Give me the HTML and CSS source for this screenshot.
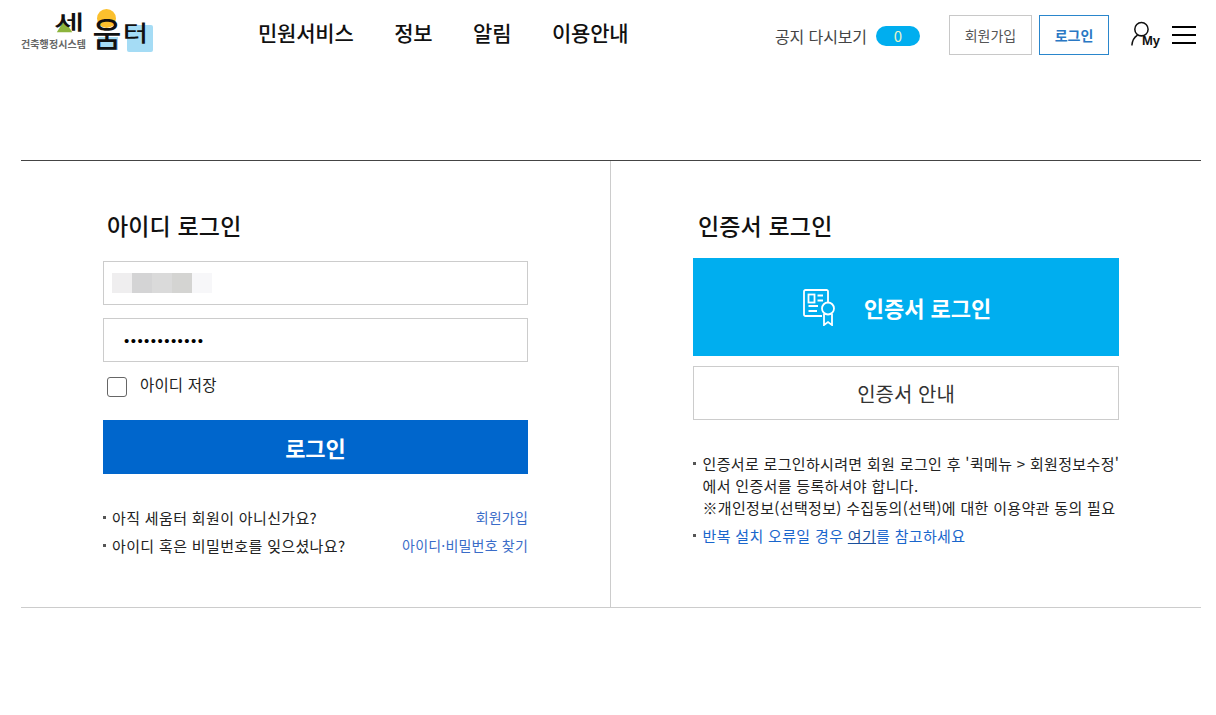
FILE: index.html
```html
<!DOCTYPE html>
<html lang="ko">
<head>
<meta charset="utf-8">
<title>세움터 로그인</title>
<link rel="stylesheet" href="styles.css">
</head>
<body>
<header class="top">
  <a class="logo" href="#">
    <span class="logo-sun"></span>
    <span class="logo-sq1"></span>
    <span class="logo-sq2"></span>
    <svg class="logo-tri" viewBox="0 0 24 20"><path d="M12 1 23 19H1Z" fill="#8cb43c"/></svg>
    <span class="logo-se">세</span>
    <span class="logo-um">움</span>
    <span class="logo-teo">터</span>
    <span class="logo-sub">건축행정시스템</span>
  </a>
  <nav class="gnb">
    <a href="#">민원서비스</a>
    <a href="#">정보</a>
    <a href="#">알림</a>
    <a href="#">이용안내</a>
  </nav>
  <div class="util">
    <span class="notice">공지 다시보기</span>
    <span class="pill">0</span>
    <a class="btn-join" href="#">회원가입</a>
    <a class="btn-login" href="#">로그인</a>
    <a class="my" href="#" aria-label="My">
      <svg class="my-icon" viewBox="0 0 20 26"><circle cx="11" cy="8.500" r="7" fill="none" stroke="#111" stroke-width="1.600"/><path d="M6.500 15C3.500 17 1.500 20 1 25" fill="none" stroke="#111" stroke-width="1.600" stroke-linecap="round"/></svg>
      <span class="my-text">My</span>
    </a>
    <button class="burger" aria-label="메뉴"><i></i><i></i><i></i></button>
  </div>
</header>

<main class="login">
  <section class="panel panel-id">
    <h2>아이디 로그인</h2>
    <div class="field">
      <span class="mosaic"><i class="m1"></i><i class="m2"></i><i class="m3"></i><i class="m4"></i><i class="m5"></i></span>
    </div>
    <div class="field field-pw"><span class="dots">••••••••••••</span></div>
    <label class="save"><span class="check"></span><span class="save-text">아이디 저장</span></label>
    <a class="btn-primary" href="#">로그인</a>
    <ul class="help">
      <li><span>아직 세움터 회원이 아니신가요?</span><a href="#">회원가입</a></li>
      <li><span>아이디 혹은 비밀번호를 잊으셨나요?</span><a href="#">아이디·비밀번호 찾기</a></li>
    </ul>
  </section>
  <section class="panel panel-cert">
    <h2>인증서 로그인</h2>
    <a class="btn-cert" href="#">
      <svg class="cert-icon" viewBox="0 0 32 37" fill="none" stroke="#fff" stroke-width="1.800">
        <path d="M19 27H2.500A1.500 1.500 0 0 1 1 25.500V2.500A1.500 1.500 0 0 1 2.500 1H23.500A1.500 1.500 0 0 1 25 2.500V13"/>
        <rect x="5.500" y="5.500" width="6" height="8"/>
        <path d="M14.500 6.500H20M14.500 11.500H20M5.500 17H15M5.500 22H14"/>
        <circle cx="25" cy="19.500" r="6"/>
        <path d="M21 25V36L25 33 29 36V25"/>
      </svg>
      <span>인증서 로그인</span>
    </a>
    <a class="btn-guide" href="#">인증서 안내</a>
    <ul class="notes">
      <li>인증서로 로그인하시려면 회원 로그인 후 '퀵메뉴 &gt; 회원정보수정'<br>에서 인증서를 등록하셔야 합니다.<br>※개인정보(선택정보) 수집동의(선택)에 대한 이용약관 동의 필요</li>
      <li class="blue">반복 설치 오류일 경우 <a href="#">여기</a>를 참고하세요</li>
    </ul>
  </section>
</main>
</body>
</html>
```

FILE: styles.css
```css
* { box-sizing: border-box; }
html, body { margin: 0; padding: 0; background: #fff; }
body {
  font-family: "Noto Sans CJK KR", "Noto Sans", sans-serif;
  color: #111;
  height: 715px;
  overflow: hidden;
}
a { color: inherit; text-decoration: none; }
ul { list-style: none; margin: 0; padding: 0; }
h2 { margin: 0; font-weight: 500; }

.top {
  height: 66px;
  display: flex;
  align-items: flex-start;
  padding-left: 21px;
}
.logo { position: relative; display: block; width: 135px; height: 54px; flex: none; }
.logo-sun { position: absolute; left: 76px; top: 9px; width: 19px; height: 19px; border-radius: 50%; background: #fbc02d; }
.logo-sq1 { position: absolute; left: 77px; top: 37px; width: 20px; height: 13px; background: #a5dcf5; }
.logo-sq2 { position: absolute; left: 106px; top: 25px; width: 26px; height: 27px; background: #a5dcf5; border-radius: 2px; }
.logo-tri { position: absolute; left: 35px; top: 19px; width: 17px; height: 14px; }
.logo-se, .logo-um, .logo-teo { position: absolute; color: #111; white-space: nowrap; font-weight: 500; }
.logo-se { left: 33px; top: 11px; font-size: 20px; line-height: 22px; transform: scaleX(1.65); transform-origin: left center; }
.logo-um { left: 73px; top: 20px; font-size: 28px; line-height: 26px; transform: scale(1.12, 1.2); }
.logo-teo { left: 103px; top: 22px; font-size: 25px; line-height: 21px; transform: scale(1.1, 0.85); }
.logo-sub { position: absolute; left: 0; top: 38px; font-size: 10px; line-height: 12px; font-weight: 700; color: #666; white-space: nowrap; letter-spacing: 0.100px; }

.gnb { display: flex; gap: 40.600px; margin-left: 102px; padding-top: 18px; }
.gnb a { font-size: 21px; line-height: 29px; font-weight: 500; letter-spacing: -0.200px; }

.util { display: flex; align-items: flex-start; margin-left: auto; padding-right: 20px; }
.notice { font-size: 16px; line-height: 22px; color: #444; margin-top: 25px; letter-spacing: -0.100px; }
.pill {
  width: 44px; height: 20px; margin: 26px 29px 0 9px; border-radius: 10px;
  background: #00aeef; color: #e8f4c8; font-size: 15px; line-height: 20px; text-align: center;
}
.btn-join, .btn-login {
  height: 40px; margin-top: 15px; font-size: 14px; line-height: 38px; text-align: center;
}
.btn-join { width: 83px; border: 1px solid #c8c8c8; color: #555; }
.btn-login { width: 70px; margin-left: 7px; border: 1px solid #2a86cc; color: #2a78c4; font-weight: 700; }
.my { position: relative; display: block; width: 30px; height: 30px; margin: 21px 0 0 22px; }
.my-icon { position: absolute; left: 0; top: 0; width: 19px; height: 25px; }
.my-text { position: absolute; left: 11px; top: 12px; font-family: "Liberation Sans", sans-serif; font-size: 13px; line-height: 16px; font-weight: 700; color: #111; }
.burger { display: flex; flex-direction: column; gap: 6px; width: 24px; margin: 26px 0 0 11px; padding: 0; border: 0; background: none; }
.burger i { display: block; height: 2px; background: #000; }

.login {
  display: flex;
  margin: 94px 15px 0 21px;
  height: 448px;
  border-top: 1px solid #444;
  border-bottom: 1px solid #ccc;
}
.panel { flex: 1 1 0; }
.panel h2 { font-size: 23px; line-height: 34px; letter-spacing: 0.150px; }
.panel-id { flex: none; width: 590px; border-right: 1px solid #ccc; padding: 47px 0 0 82px; }
.panel-id h2 { margin-left: 4px; }
.field { width: 425px; height: 44px; margin-top: 19px; border: 1px solid #ccc; display: flex; align-items: center; padding-left: 8px; }
.field-pw { margin-top: 13px; padding-left: 20px; }
.mosaic { display: flex; }
.mosaic i { display: block; width: 20px; height: 20px; }
.m1 { background: #efeeef; }
.m2 { background: #d4d4d5; }
.m3 { background: #dadada; }
.m4 { background: #d4d4d2; }
.m5 { background: #f7f7f9; }
.dots { font-family: "Liberation Sans", sans-serif; font-size: 15px; line-height: 20px; letter-spacing: 1.450px; color: #000; padding-top: 2px; }
.save { display: flex; align-items: center; height: 24px; margin-top: 12px; padding-left: 4px; font-size: 15.500px; letter-spacing: 0.150px; color: #222; }
.check { width: 20px; height: 20px; margin: 2px 13px 0 0; border: 1px solid #666; border-radius: 3px; background: #fff; }
.save-text { margin-bottom: 4px; }
.btn-primary {
  display: block; width: 425px; height: 54px; margin-top: 22px;
  background: #0066cc; color: #fff; font-size: 22px; line-height: 54px; font-weight: 700; text-align: center;
}
.help { width: 425px; margin-top: 30px; }
.help li { position: relative; display: flex; justify-content: space-between; padding-left: 9px; font-size: 15px; letter-spacing: 0.350px; line-height: 28px; color: #222; }
.help li::before, .notes li::before {
  content: ""; position: absolute; left: 0; top: 12px; width: 3px; height: 3px; background: #555;
}
.help a { color: #3a6cc8; font-size: 14px; letter-spacing: 0.200px; margin-top: -1px; }

.panel-cert { padding: 47px 82px 0 82px; }
.panel-cert h2 { margin-left: 5px; }
.btn-cert {
  display: flex; align-items: center; justify-content: center; gap: 29px;
  width: 426px; height: 98px; margin-top: 16px; padding-right: 18px;
  background: #00aeef; color: #fff; font-size: 22px; font-weight: 700;
}
.cert-icon { width: 32px; height: 37px; }
.btn-guide {
  display: block; width: 426px; height: 54px; margin-top: 10px;
  border: 1px solid #ccc; color: #333; font-size: 20px; line-height: 53px; text-align: center;
}
.notes { margin-top: 33px; width: 426px; }
.notes li { position: relative; padding-left: 9.500px; font-size: 15px; letter-spacing: 0.330px; line-height: 22px; color: #222; white-space: nowrap; }
.notes li::before { top: 9px; }
.notes li + li { margin-top: 6px; }
.notes .blue { color: #1a66cc; }
.notes .blue a { color: #1a4f9c; text-decoration: underline; }
```
